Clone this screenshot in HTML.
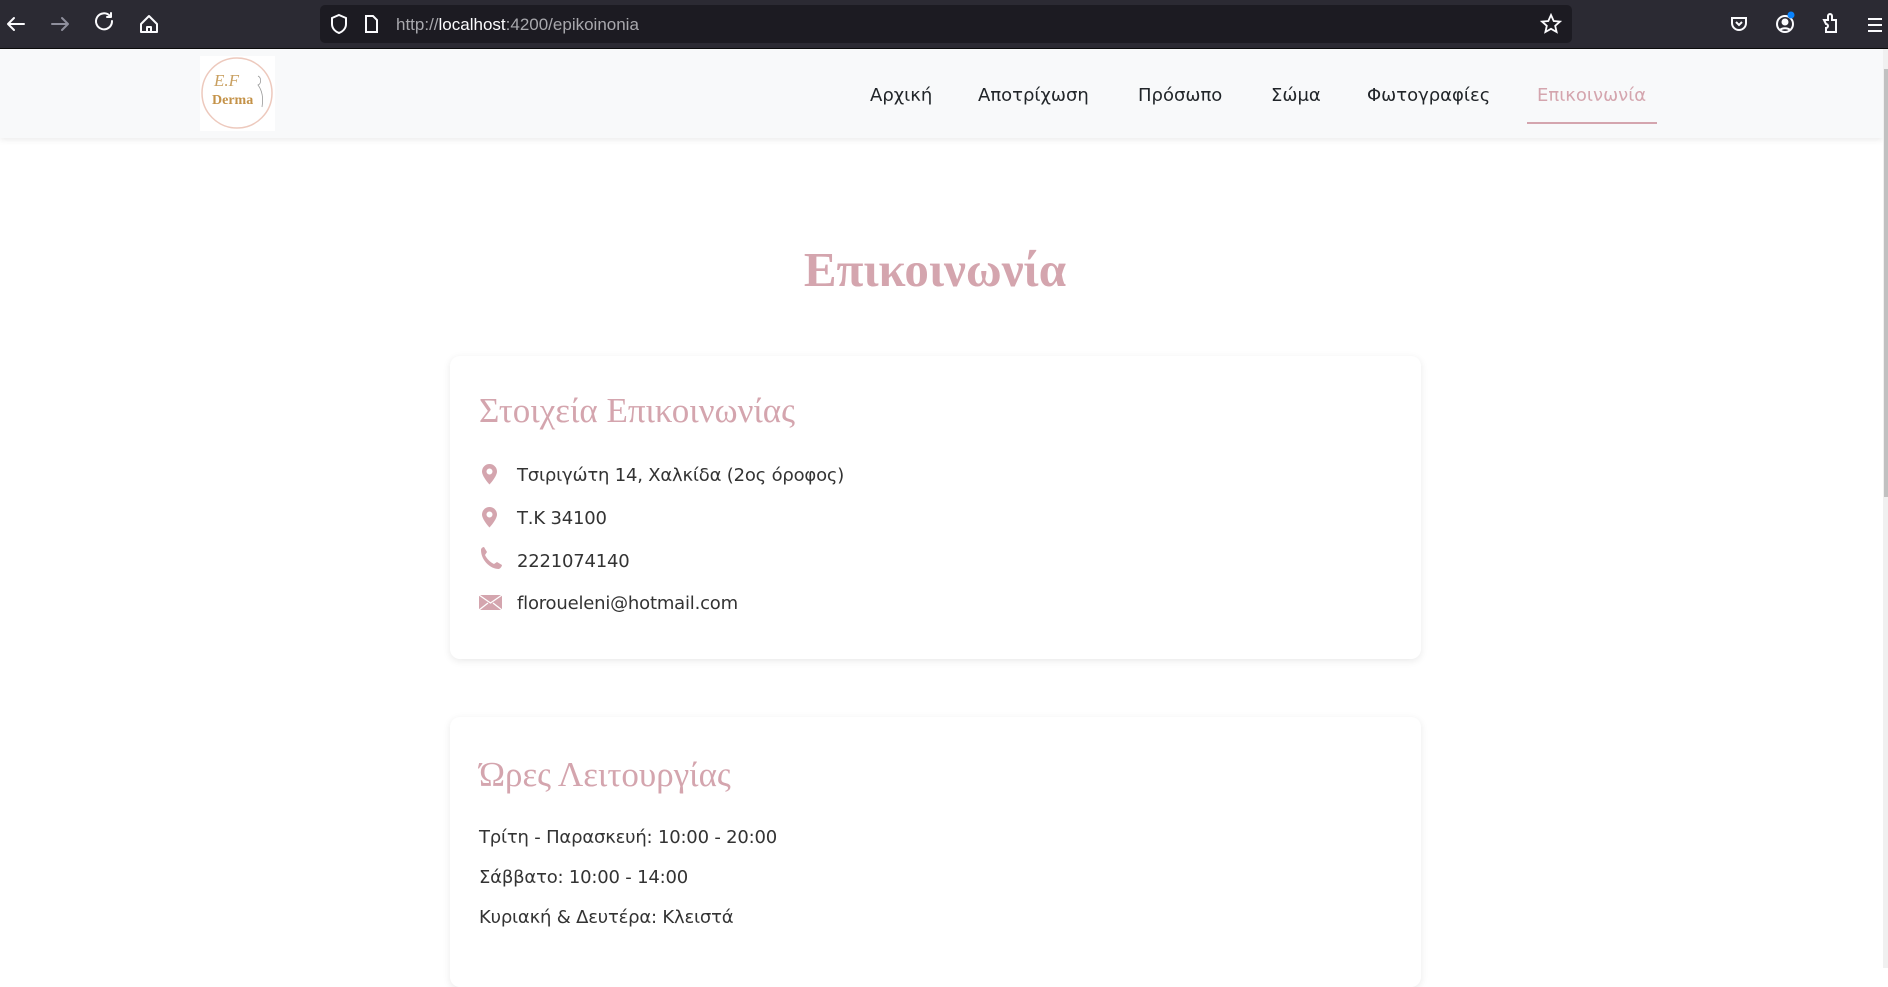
<!DOCTYPE html>
<html><head><meta charset="utf-8"><style>
*{margin:0;padding:0;box-sizing:border-box}
body{width:1888px;height:968px;overflow:hidden;background:#fff;font-family:"DejaVu Sans","Liberation Sans",sans-serif;position:relative}
.abs{position:absolute}
.chrome{left:0;top:0;width:1888px;height:49px;background:#2b2a33;border-bottom:1px solid #0c0c0d}
.url{left:320px;top:5px;width:1252px;height:38px;background:#1c1b22;border-radius:5px}
.urltext{left:396px;top:15px;font-size:17px;color:#a8a8ad;white-space:nowrap;font-family:"Liberation Sans",sans-serif}
.urltext b{color:#fbfbfe;font-weight:normal}
.nav{left:0;top:49px;width:1883px;height:89px;background:#f8f9fa;box-shadow:0 2px 6px rgba(0,0,0,.08)}
.nl{top:85px;font-size:18px;color:#212529;white-space:nowrap}
.h1{left:0;width:1870px;top:241px;text-align:center;font-family:"Liberation Serif",serif;font-weight:bold;font-size:49px;color:#d4a5ae}
.card{left:450px;width:971px;background:#fff;border-radius:10px;box-shadow:0 2px 8px rgba(0,0,0,.09)}
.ct{left:479px;font-family:"Liberation Serif",serif;font-size:35px;color:#d4a5ae;white-space:nowrap}
.tx{font-size:18px;color:#333;white-space:nowrap;letter-spacing:-0.2px}
</style></head><body>
<div class="abs chrome"></div>
<svg class="abs" style="left:0;top:0" width="170" height="48" fill="none" stroke-width="2" stroke-linecap="round" stroke-linejoin="round">
<path d="M24 24H8M14 18l-6 6 6 6" stroke="#fbfbfe"/>
<path d="M52 24h16M62 18l6 6-6 6" stroke="#8f8f9d"/>
<path d="M112 21a8 8 0 1 1-2-5" stroke="#fbfbfe"/><path d="M111 13v4h-4" stroke="#fbfbfe"/>
<path d="M141 24l8-8 8 8v8h-16z" stroke="#fbfbfe"/><path d="M147 32v-5h4v5" stroke="#fbfbfe"/>
</svg>
<div class="abs url"></div>
<svg class="abs" style="left:328px;top:12px" width="60" height="26" fill="none" stroke="#fbfbfe" stroke-width="2"><path d="M11 3l7 3v6c0 5-4 8-7 9-3-1-7-4-7-9V6z"/><path d="M38 4h7l4 4v12H38z"/></svg>
<div class="abs urltext">http://<b>localhost</b>:4200/epikoinonia</div>
<svg class="abs" style="left:1540px;top:13px" width="22" height="22" fill="none" stroke="#fbfbfe" stroke-width="1.8"><path d="M11 2l2.7 6 6.3.6-4.8 4.2 1.4 6.2L11 15.8 5.4 19l1.4-6.2L2 8.6 8.3 8z"/></svg>
<svg class="abs" style="left:1728px;top:10px" width="160" height="30" fill="none" stroke="#fbfbfe" stroke-width="2">
<path d="M4 8h14v5a7 7 0 0 1-14 0z"/><path d="M8 12l3 3 3-3"/>
<circle cx="57" cy="14" r="8"/><circle cx="57" cy="12" r="2.5" fill="#fbfbfe"/><path d="M52 20a6 4 0 0 1 10 0"/>
<circle cx="63" cy="5" r="3.5" fill="#0a84ff" stroke="none"/>
<path d="M96 10h4V6a2 2 0 0 1 4 0v4h4v12h-10v-4a2 2 0 0 0 0-4z"/>
<path d="M140 9h14M140 15h14M140 21h14"/>
</svg>
<div class="abs nav"></div>
<div class="abs" style="left:1883px;top:49px;width:5px;height:919px;background:#f0f0f0"></div>
<div class="abs" style="left:1884px;top:69px;width:4px;height:428px;background:#c1c1c1"></div>
<div class="abs" style="left:200px;top:56px;width:75px;height:75px;background:#fff"></div>
<svg class="abs" style="left:200px;top:56px" width="75" height="75"><circle cx="37" cy="37" r="35" fill="none" stroke="#edc9bd" stroke-width="1.5"/>
<text x="14" y="30" font-family="Liberation Serif" font-style="italic" font-size="17" fill="#c9a061">E.F</text>
<text x="12" y="48" font-family="Liberation Serif" font-weight="bold" font-size="14" fill="#c49248">Derma</text>
<path d="M58 20c4 2 3 8 0 9 3 4 6 10 4 22" fill="none" stroke="#999" stroke-width=".8"/></svg>
<div class="abs nl" style="left:870px">Αρχική</div>
<div class="abs nl" style="left:978px">Αποτρίχωση</div>
<div class="abs nl" style="left:1138px">Πρόσωπο</div>
<div class="abs nl" style="left:1271px">Σώμα</div>
<div class="abs nl" style="left:1367px">Φωτογραφίες</div>
<div class="abs nl" style="left:1537px;color:#d4a5ae">Επικοινωνία</div>
<div class="abs" style="left:1527px;top:122px;width:130px;height:2px;background:#d4a5ae"></div>
<div class="abs h1">Επικοινωνία</div>
<div class="abs card" style="top:356px;height:303px"></div>
<div class="abs ct" style="top:391px">Στοιχεία Επικοινωνίας</div>
<svg class="abs" style="left:478px;top:462px" width="28" height="152" fill="#d4a5ae">
<path d="M11.5 2a7.5 7.5 0 0 0-7.5 7.5c0 5 7.5 13 7.5 13s7.5-8 7.5-13A7.5 7.5 0 0 0 11.5 2zm0 4.5a3 3 0 1 1 0 6 3 3 0 0 1 0-6z"/>
<path d="M11.5 45a7.5 7.5 0 0 0-7.5 7.5c0 5 7.5 13 7.5 13s7.5-8 7.5-13A7.5 7.5 0 0 0 11.5 45zm0 4.5a3 3 0 1 1 0 6 3 3 0 0 1 0-6z"/>
<path d="M3 88c0-2 2-3 3-3l3 5-2 3c2 4 5 7 9 9l3-2 5 3c0 1-1 3-3 4-9 0-18-9-18-19z"/>
<path d="M1 133h23v15H1z"/><path d="M1 133l11.5 8L24 133M1 148l9-7M24 148l-9-7" stroke="#fff" stroke-width="1.3" fill="none"/>
</svg>
<div class="abs tx" style="left:517px;top:465px">Τσιριγώτη 14, Χαλκίδα (2ος όροφος)</div>
<div class="abs tx" style="left:517px;top:508px">Τ.Κ 34100</div>
<div class="abs tx" style="left:517px;top:551px">2221074140</div>
<div class="abs tx" style="left:517px;top:593px">floroueleni@hotmail.com</div>
<div class="abs card" style="top:717px;height:270px"></div>
<div class="abs ct" style="top:755px">Ώρες Λειτουργίας</div>
<div class="abs tx" style="left:479px;top:827px">Τρίτη - Παρασκευή: 10:00 - 20:00</div>
<div class="abs tx" style="left:479px;top:867px">Σάββατο: 10:00 - 14:00</div>
<div class="abs tx" style="left:479px;top:907px">Κυριακή &amp; Δευτέρα: Κλειστά</div>
</body></html>
